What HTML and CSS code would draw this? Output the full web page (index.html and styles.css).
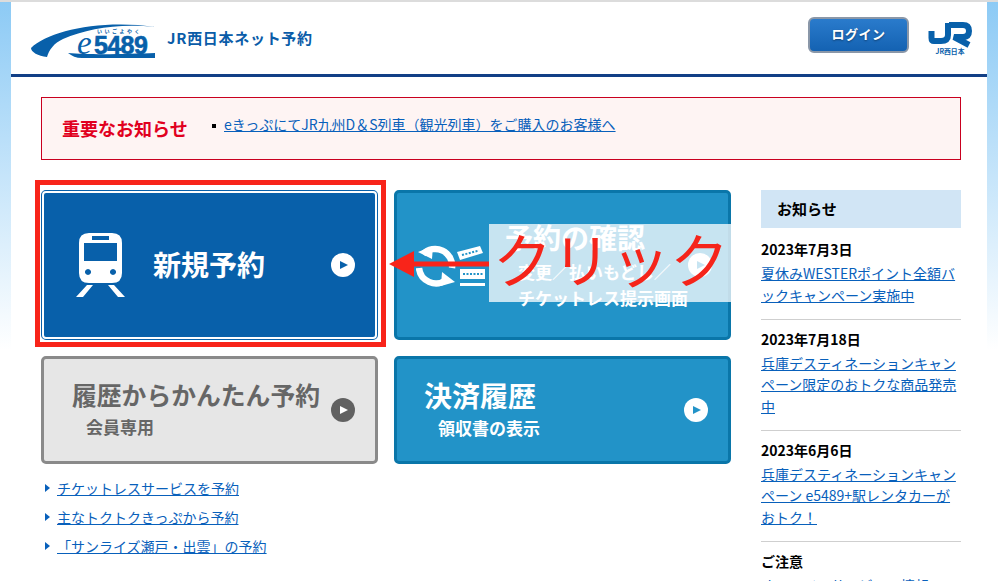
FILE: index.html
```html
<!DOCTYPE html>
<html lang="ja">
<head>
<meta charset="utf-8">
<title>JR西日本ネット予約 e5489</title>
<link rel="stylesheet" href="styles.css">
</head>
<body>
<div class="page">
  <header class="header">
    <div class="brand">
      <svg class="logo" viewBox="0 0 130 40" aria-label="e5489">
        <path class="logo-fill" d="M1 28 C18 11 70 -1 126 7 C90 3 58 8 33 19 C24 23 19 30 17 37 C8 36 1 32 1 28 Z"/>
        <path class="logo-fill" d="M38 33 C60 35 100 34 125 33 L125 38 L52 38 C46 38 42 36 38 33 Z"/>
        <text class="logo-e" x="47" y="34">e</text>
        <text class="logo-num" x="64" y="34">5489</text>
        <text class="logo-kana" x="67" y="13">いいごよやく</text>
      </svg>
      <span class="site-name">JR西日本ネット予約</span>
    </div>
    <div class="header-right">
      <a class="login" href="#">ログイン</a>
      <svg class="jr" viewBox="0 0 44 36" aria-label="JR西日本">
        <path class="jr-s" d="M20 3 V15 Q20 21 13 21 H6 Q3.500 21 3.500 18 V11"/>
        <path class="jr-s" d="M21 5 H35 Q41 5 41 11 Q41 17 35 17 H26 L41 25"/>
        <text class="jr-t" x="22" y="34">JR西日本</text>
      </svg>
    </div>
  </header>

  <main class="content">
    <section class="notice">
      <h2 class="notice-title">重要なお知らせ</h2>
      <ul class="notice-list">
        <li><a href="#">eきっぷにてJR九州D＆S列車（観光列車）をご購入のお客様へ</a></li>
      </ul>
    </section>

    <div class="columns">
      <div class="primary">
        <div class="tiles">
          <a class="tile tile-main" href="#">
            <svg class="train" viewBox="0 0 50 66">
              <path class="ico" fill-rule="evenodd" d="M13 0 H36 Q46 0 46 10 V40 Q46 50 36 50 H13 Q3 50 3 40 V10 Q3 0 13 0 Z M16 3 V7 H33 V3 Z M8 10 V28 H41 V10 Z M12 36 A3 3 0 1 0 12.010 36 Z M37 36 A3 3 0 1 0 37.010 36 Z"/>
              <path class="ico" d="M11 52 H17 L7 64 H0 Z M32 52 H38 L49 64 H42 Z"/>
            </svg>
            <span class="tile-title tile-title-main">新規予約</span>
            <span class="play"></span>
          </a>
          <a class="tile tile-teal tile-confirm" href="#">
            <svg class="refresh" viewBox="0 0 70 46">
              <path class="ring" d="M7 10 A17 17 0 0 1 36 24"/>
              <path class="ring" d="M3 24 A17 17 0 0 0 30 36"/>
              <polygon class="ico" points="2,8 17,2 16,15"/>
              <polygon class="ico" points="39,38 25,42 26,28"/>
              <path class="ico" d="M41 8 L64 2 L67 9 L44 16 Z"/>
              <path class="ico" d="M44 25 H69 V35 H44 Z M44 39 H69 V42 H44 Z"/>
              <path class="ticket-dots" d="M46 11 L63 6.500 M47 30 H67"/>
            </svg>
            <span class="tile-text tile-text-confirm">
              <span class="tile-title">予約の確認</span>
              <span class="tile-sub tile-sub-confirm">変更／払いもどし／<br>チケットレス提示画面</span>
            </span>
            <span class="play"></span>
          </a>
          <a class="tile tile-gray" href="#">
            <span class="tile-text tile-text-gray">
              <span class="tile-title-gray">履歴からかんたん予約</span>
              <span class="tile-sub tile-sub-indent">会員専用</span>
            </span>
            <span class="play play-dark"></span>
          </a>
          <a class="tile tile-teal" href="#">
            <span class="tile-text tile-text-pay">
              <span class="tile-title">決済履歴</span>
              <span class="tile-sub tile-sub-indent tile-sub-pay">領収書の表示</span>
            </span>
            <span class="play"></span>
          </a>
        </div>
        <ul class="links">
          <li><a href="#">チケットレスサービスを予約</a></li>
          <li><a href="#">主なトクトクきっぷから予約</a></li>
          <li><a href="#">「サンライズ瀬戸・出雲」の予約</a></li>
        </ul>
      </div>

      <aside class="side">
        <h2 class="side-head">お知らせ</h2>
        <article class="news">
          <h3>2023年7月3日</h3>
          <a href="#">夏休みWESTERポイント全額バックキャンペーン実施中</a>
        </article>
        <article class="news">
          <h3>2023年7月18日</h3>
          <a href="#">兵庫デスティネーションキャンペーン限定のおトクな商品発売中</a>
        </article>
        <article class="news">
          <h3>2023年6月6日</h3>
          <a href="#">兵庫デスティネーションキャンペーン e5489+駅レンタカーがおトク！</a>
        </article>
        <article class="news news-last">
          <h3>ご注意</h3>
          <a href="#">オンラインサービスの情報</a>
        </article>
      </aside>
    </div>
  </main>
</div>

<div class="mark-box"></div>
<div class="mark-veil"></div>
<div class="mark-text">クリック</div>
<svg class="mark-arrow" viewBox="0 0 100 26">
  <path d="M0 13 L25 0 V10.500 H100 V15.500 H25 V26 Z"/>
</svg>
</body>
</html>
```
FILE: styles.css
```css
* { box-sizing: border-box; }
html, body { margin: 0; padding: 0; }
html { height: 581px; overflow: hidden; }
body {
  position: relative;
  height: 581px;
  overflow: hidden;
  border-top: 2px solid #dcdcdc;
  background: linear-gradient(#8ccaf5, #ffffff 350px) no-repeat;
  font-family: "Noto Sans CJK JP", "Noto Sans", sans-serif;
  font-size: 14px;
  color: #000;
}
a { color: #0860bb; }
ul { list-style: none; margin: 0; padding: 0; }
h2, h3 { margin: 0; }

.page { margin: 0 11px; height: 579px; overflow: hidden; background: #fff; }

.header {
  height: 75px;
  border-bottom: 3px solid #123f86;
  display: flex;
  justify-content: space-between;
  padding: 15px 15px 0 19px;
}
.brand { display: flex; align-items: flex-start; gap: 7px; }
.logo { width: 130px; height: 40px; margin-top: 3px; }
.logo-fill { fill: #0860aa; }
.logo-e { font: italic 400 33px "Liberation Serif", serif; fill: #0860aa; }
.logo-num { font: 700 25px "Liberation Sans", sans-serif; fill: #0860aa; stroke: #0860aa; stroke-width: .6px; letter-spacing: -.6px; }
.logo-kana { font: 700 5px "Noto Sans CJK JP", sans-serif; fill: #0860aa; letter-spacing: 2.500px; }
.site-name {
  font-size: 15px;
  font-weight: 700;
  color: #0a5ca8;
  line-height: 42px;
  letter-spacing: .7px;
}
.header-right { display: flex; align-items: flex-start; gap: 19px; }
.login {
  width: 101px;
  height: 36px;
  border: 2px solid #8a97a8;
  border-radius: 6px;
  background: linear-gradient(#2a7bcc, #1462b2);
  color: #fff;
  font-size: 13px;
  font-weight: 700;
  letter-spacing: .5px;
  line-height: 30px;
  text-align: center;
  text-decoration: none;
  text-shadow: 0 1px 2px rgba(0, 0, 0, .4);
}
.jr { width: 44px; height: 36px; margin-top: 3px; }
.jr-s { fill: none; stroke: #0860aa; stroke-width: 6; }
.jr-t { font: 700 6.800px "Noto Sans CJK JP", sans-serif; fill: #0860aa; text-anchor: middle; }

.content { padding: 20px 26px 0 30px; }
.notice {
  height: 63px;
  border: 1px solid #c9001f;
  background: #fef4f3;
  display: flex;
  padding: 0 20px;
}
.notice-title {
  font-size: 18px;
  font-weight: 700;
  color: #e1001e;
  line-height: 60px;
  width: 150px;
}
.notice-list li {
  position: relative;
  padding-left: 12px;
  line-height: 53px;
  font-size: 14px;
}
.notice-list li::before {
  content: "";
  position: absolute;
  left: 0;
  top: 26px;
  width: 4px;
  height: 4px;
  background: #000;
}

.columns { display: flex; gap: 30px; margin-top: 30px; }
.primary { width: 690px; }
.tiles {
  display: grid;
  grid-template-columns: 337px 337px;
  grid-template-rows: 150px 108px;
  gap: 16px;
}
.tile {
  display: flex;
  align-items: center;
  border-radius: 5px;
  border: 3px solid;
  padding-right: 20px;
  color: #fff;
  text-decoration: none;
}
.tile-main {
  background: #0860aa;
  border-color: #0860aa;
  outline: 2px solid #fff;
  outline-offset: -3px;
  padding-left: 32px;
}
.tile-teal { background: #2293c8; border-color: #0a76a9; }
.tile-gray { background: #e6e6e6; border-color: #8a8a8a; color: #666; }
.tile-confirm { padding-left: 19px; }
.train { width: 50px; height: 66px; margin-right: 27px; flex: none; margin-top: 2px; }
.ico { fill: #fff; }
.refresh { width: 70px; height: 46px; margin-right: 19px; flex: none; margin-top: 4px; }
.ring { fill: none; stroke: #fff; stroke-width: 6.500; }
.ticket-dots { fill: none; stroke: #2293c8; stroke-width: 2; stroke-dasharray: 2 1.500; }
.tile-title { font-size: 28px; font-weight: 700; line-height: 40px; display: block; white-space: nowrap; }
.tile-title-main { margin-top: -3px; }
.tile-title-gray { font-size: 24.800px; font-weight: 700; line-height: 38px; display: block; white-space: nowrap; }
.tile-text { display: block; }
.tile-text-confirm { margin-top: -2px; }
.tile-text-gray { display: block; padding-left: 28px; margin-top: -4px; }
.tile-text-pay { display: block; padding-left: 27px; margin-top: -3px; }
.tile-sub { display: block; font-size: 17px; font-weight: 700; white-space: nowrap; }
.tile-sub-confirm { line-height: 26px; padding-left: 13px; padding-top: 2px; }
.tile-sub-indent { padding-left: 14px; line-height: 28px; }
.tile-sub-pay { margin-top: -1px; }
.play {
  position: relative;
  width: 24px;
  height: 24px;
  margin-left: auto;
  border-radius: 50%;
  background: #fff;
  flex: none;
}
.play::after {
  content: "";
  position: absolute;
  left: 9px;
  top: 7.500px;
  border-left: 8px solid #0860aa;
  border-top: 4.500px solid transparent;
  border-bottom: 4.500px solid transparent;
}
.tile-teal .play::after { border-left-color: #2293c8; }
.play-dark { background: #616161; }
.play-dark::after { border-left-color: #fff; }

.links { margin-top: 14px; }
.links li {
  position: relative;
  padding-left: 16px;
  line-height: 21px;
  margin-bottom: 8px;
  font-size: 14px;
}
.links li::before {
  content: "";
  position: absolute;
  left: 4px;
  top: 6px;
  border-left: 5px solid #0860bb;
  border-top: 4px solid transparent;
  border-bottom: 4px solid transparent;
}

.side { width: 200px; flex: none; }
.side-head {
  height: 38px;
  background: #d1e5f5;
  padding-left: 16px;
  font-size: 15px;
  font-weight: 700;
  line-height: 37px;
  margin-bottom: 11px;
}
.news {
  border-bottom: 1px solid #cfcfcf;
  padding-bottom: 12.500px;
  margin-bottom: 9px;
  line-height: 21.500px;
  line-break: anywhere;
}
.news h3 { font-size: 14px; font-weight: 700; line-height: 20px; margin-bottom: 4px; }
.news-last { border-bottom: 0; }

.mark-box {
  position: absolute;
  left: 35px;
  top: 178px;
  width: 351px;
  height: 167px;
  border: 5px solid #f8241a;
}
.mark-veil {
  position: absolute;
  left: 489px;
  top: 222px;
  width: 242px;
  height: 78px;
  background: rgba(255, 255, 255, .75);
}
.mark-text {
  position: absolute;
  left: 493px;
  top: 213px;
  font-size: 59px;
  line-height: 86px;
  color: #f5241a;
  white-space: nowrap;
}
.mark-arrow {
  position: absolute;
  left: 389px;
  top: 249px;
  width: 100px;
  height: 26px;
  fill: #f8241a;
}
```
